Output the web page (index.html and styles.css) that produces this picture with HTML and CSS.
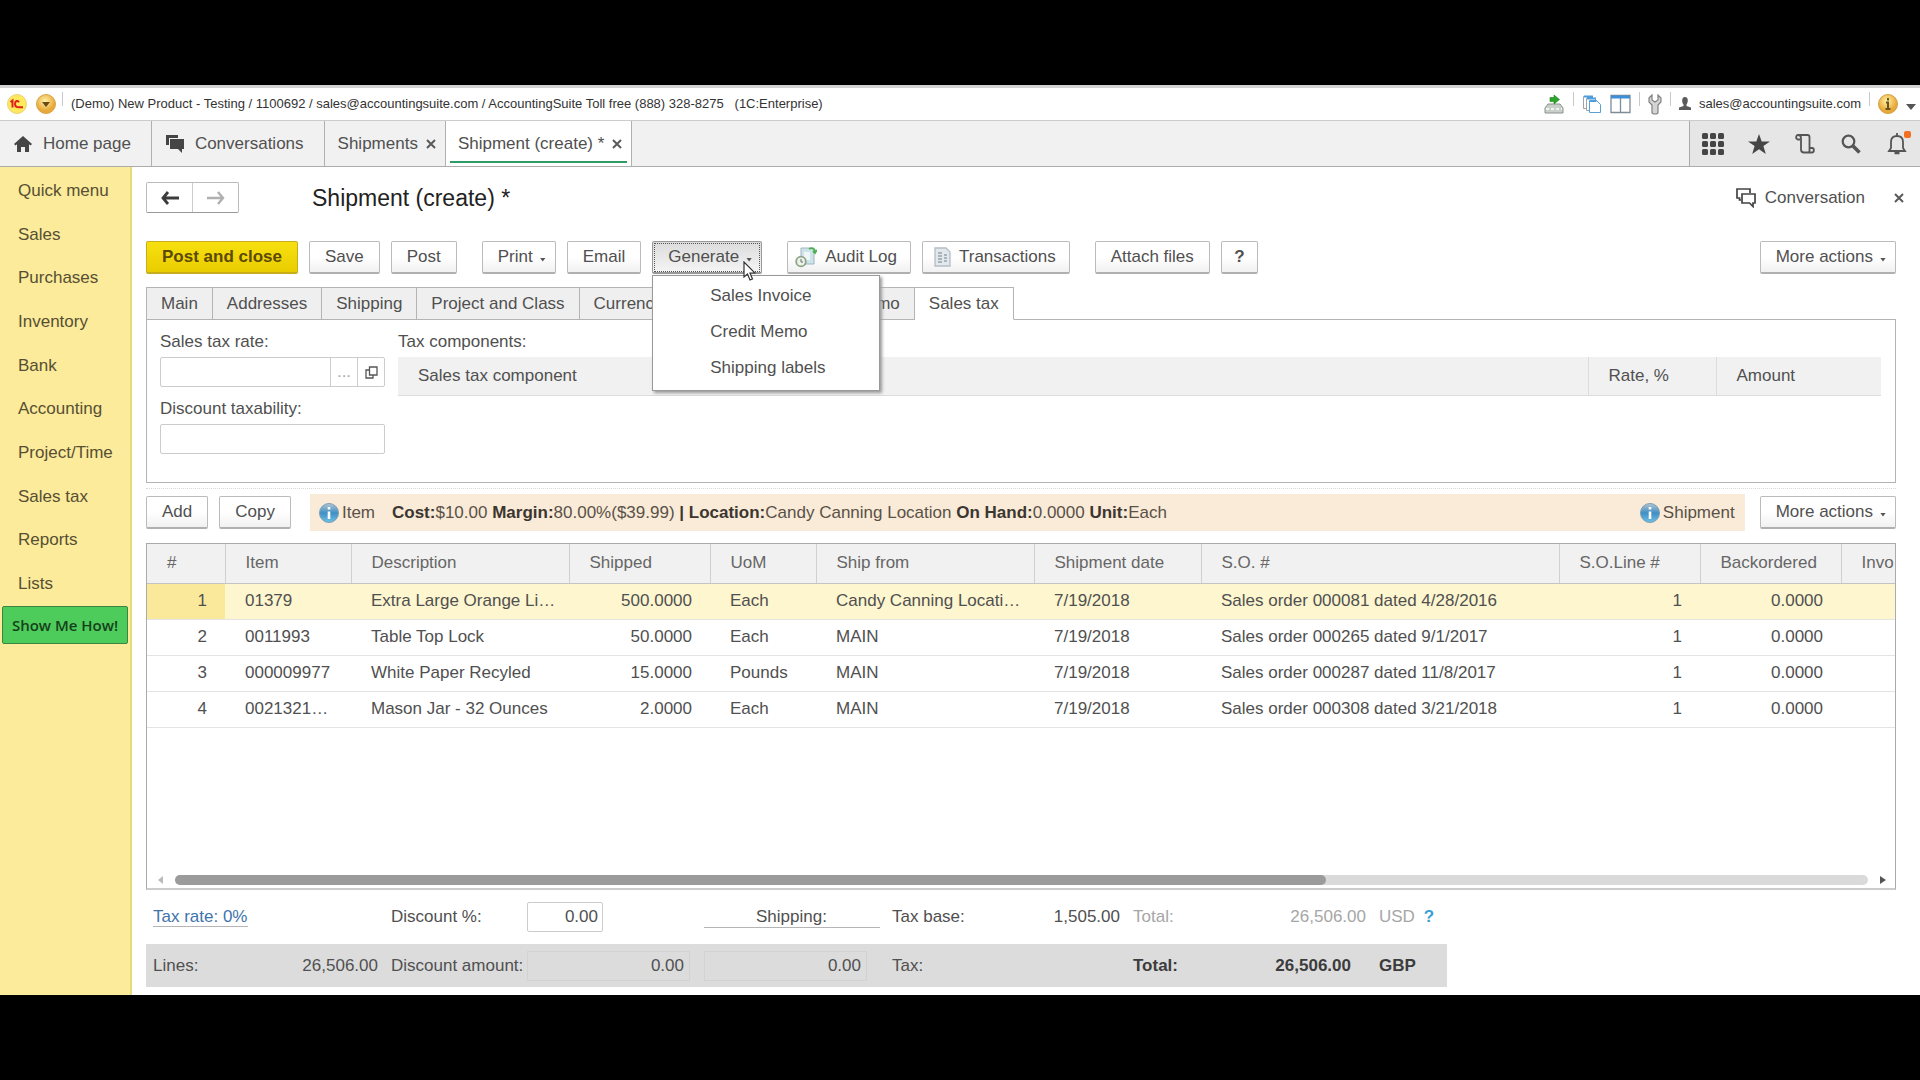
FILE: index.html
```html
<!DOCTYPE html>
<html lang="en">
<head>
<meta charset="utf-8">
<title>Shipment (create) - AccountingSuite</title>
<link rel="stylesheet" href="styles.css">
</head>
<body>
<div class="app">
  <header class="titlebar">
    <svg class="coin" viewBox="0 0 20 20"><defs><radialGradient id="gold" cx="45%" cy="35%"><stop offset="0" stop-color="#fff3a8"/><stop offset="1" stop-color="#e8a93a"/></radialGradient></defs><circle cx="10" cy="10" r="9.5" fill="#ffe95c" stroke="#e8d27a"/><path d="M3.500 8l2-1.500v7M12 8.200c-1-2-4-1.600-4 1.800 0 3 2 3.300 4 3.300h4" fill="none" stroke="#e0241b" stroke-width="2"/></svg>
    <svg class="coin" viewBox="0 0 20 20"><circle cx="10" cy="10" r="9.500" fill="url(#gold)" stroke="#d9a548"/><path d="M6 8h8l-4 5z" fill="#6b4a16"/></svg>
    <span class="sep"></span>
    <span class="app-title">(Demo) New Product - Testing / 1100692 / sales@accountingsuite.com / AccountingSuite Toll free (888) 328-8275 &nbsp; (1C:Enterprise)</span>
    <div class="title-tools">
      <svg width="22" height="20" viewBox="0 0 22 20"><path d="M2 14l3-4h12l3 4v5H2z" fill="#c9cfca" stroke="#8a948c"/><path d="M3 15h16" stroke="#fff" stroke-width="1.500" stroke-dasharray="3 2"/><path d="M7 3.500h4V1l5.500 4.500L11 10V7.500H7z" fill="#2ba52b" stroke="#1c7d1c" stroke-width=".6"/></svg>
      <span class="sep"></span>
      <svg width="20" height="20" viewBox="0 0 20 20" fill="#fff" stroke="#9ba5ae"><path d="M1.500 2.500h9v12h-9z"/><path d="M4.500 4.500h9v12h-9z"/><path d="M7.500 6.500h7l4 4v8h-11z" stroke="#5d9fd0"/><path d="M2 2.500h9M5 4.500h9M8 7h6.500" stroke="#4f9edb" stroke-width="2"/></svg>
      <svg width="21" height="20" viewBox="0 0 21 20"><path d="M1 1.500h19v17H1zM10.500 3v15" fill="#fff" stroke="#7e8c98" stroke-width="1.300"/><path d="M1 3h19" stroke="#3e8fd6" stroke-width="3"/></svg>
      <span class="sep"></span>
      <svg width="14" height="21" viewBox="0 0 14 21"><path d="M4 1L1 4v4l3 3v7.500c0 2 6 2 6 0V11l3-3V4l-3-3v5L7 8 4 6z" fill="#d4d4d4" stroke="#808080" stroke-width="1.200"/></svg>
      <span class="sep"></span>
      <svg width="12" height="14" viewBox="0 0 12 14"><path d="M6 0c4 0 3 6 1.500 7.500V9L12 10.500V13H0v-2.500L4.500 9V7.500C3 6 2 0 6 0z" fill="#5a5a5a"/></svg>
      <span>sales@accountingsuite.com</span>
      <span class="sep"></span>
      <svg class="coin" viewBox="0 0 20 20"><circle cx="10" cy="10" r="9.500" fill="url(#gold)" stroke="#d3a03c"/><path d="M10 4v2.500M8 8.500h2V15M7.500 15h5" stroke="#6b5220" stroke-width="2" fill="none"/></svg>
      <svg class="caret-big" width="10" height="6" viewBox="0 0 10 6"><path d="M0 0h10L5 6z" fill="#555"/></svg>
    </div>
  </header>

  <nav class="windowbar">
    <button class="wtab home"><svg width="18" height="16" viewBox="0 0 18 16"><path d="M9 0l9 8-1.500 1.500L15 8.300V16h-4v-5H7v5H3V8.300L1.500 9.500 0 8z" fill="#454545"/></svg>Home page</button>
    <button class="wtab talks"><svg width="18" height="18" viewBox="0 0 18 18"><path d="M0 0h12v3H3v7H0z" fill="#454545"/><path d="M4 4h14v10h-2v4l-4-4H4z" fill="#454545"/></svg>Conversations</button>
    <button class="wtab">Shipments<svg class="x" viewBox="0 0 10 10"><path d="M1 1l8 8M9 1L1 9"/></svg></button>
    <button class="wtab active">Shipment (create) *<svg class="x" viewBox="0 0 10 10"><path d="M1 1l8 8M9 1L1 9"/></svg></button>
    <div class="window-tools">
      <button class="tool" aria-label="Sections"><svg width="22" height="22" viewBox="0 0 22 22" fill="#454545"><rect width="6" height="6" rx="1.500"/><rect x="8" width="6" height="6" rx="1.500"/><rect x="16" width="6" height="6" rx="1.500"/><rect y="8" width="6" height="6" rx="1.500"/><rect x="8" y="8" width="6" height="6" rx="1.500"/><rect x="16" y="8" width="6" height="6" rx="1.500"/><rect y="16" width="6" height="6" rx="1.500"/><rect x="8" y="16" width="6" height="6" rx="1.500"/><rect x="16" y="16" width="6" height="6" rx="1.500"/></svg></button>
      <button class="tool" aria-label="Favorites"><svg width="22" height="20" viewBox="0 0 22 20"><path d="M11 0l2.700 7.400H22l-6.600 4.700L17.800 20 11 15.200 4.200 20l2.400-7.900L0 7.400h8.300z" fill="#454545"/></svg></button>
      <button class="tool" aria-label="History"><svg width="20" height="20" viewBox="0 0 20 20" fill="none" stroke="#555" stroke-width="1.800"><path d="M5 5.500H3C.5 5.500.5 1 3 1h9.500q2 0 2 2v11M3 1q3 0 3 3v11.500q0 3 3 3h8c2.500 0 2.500-4.500 0-4.500h-2.500v2.500q0 2-1.500 2"/></svg></button>
      <button class="tool" aria-label="Search"><svg width="20" height="20" viewBox="0 0 20 20" fill="none" stroke="#555"><circle cx="7.500" cy="7.500" r="5.800" stroke-width="2.200"/><path d="M12 12l6.500 6.500" stroke-width="3.600"/></svg></button>
      <button class="tool" aria-label="Notifications"><svg width="20" height="22" viewBox="0 0 20 22" fill="none" stroke="#555" stroke-width="1.800"><path d="M10 0v3M2 18h16l-2-3V9q0-6-6-6T4 9v6z"/><path d="M7.500 20h5" stroke-width="2.500"/></svg><span class="dot"></span></button>
    </div>
  </nav>

  <div class="body">
    <aside class="sidebar">
      <ul class="menu">
        <li><a href="#">Quick menu</a></li><li><a href="#">Sales</a></li><li><a href="#">Purchases</a></li><li><a href="#">Inventory</a></li><li><a href="#">Bank</a></li><li><a href="#">Accounting</a></li><li><a href="#">Project/Time</a></li><li><a href="#">Sales tax</a></li><li><a href="#">Reports</a></li><li><a href="#">Lists</a></li>
      </ul>
      <button class="show-me">Show Me How!</button>
    </aside>

    <main class="main">
      <div class="head">
        <div class="history">
          <button aria-label="Back"><svg width="18" height="14" viewBox="0 0 18 14"><path d="M7 1L2 7l5 6M2 7h16" fill="none" stroke="#3c3c3c" stroke-width="2.800"/></svg></button>
          <button aria-label="Forward"><svg width="18" height="14" viewBox="0 0 18 14"><path d="M11 1l5 6-5 6M16 7H0" fill="none" stroke="#b0b0b0" stroke-width="2.400"/></svg></button>
        </div>
        <h1>Shipment (create) *</h1>
        <button class="conversation"><svg width="20" height="20" viewBox="0 0 20 20" fill="none" stroke="#444" stroke-width="1.700"><path d="M5 12H3.500v-2H1V1h13v4"/><path d="M6 6h13v9h-2v3.500L13.500 15H6z"/></svg>Conversation</button>
        <button class="close" aria-label="Close"><svg class="x" viewBox="0 0 10 10"><path d="M1 1l8 8M9 1L1 9"/></svg></button>
      </div>

      <div class="toolbar">
        <button class="btn primary">Post and close</button>
        <button class="btn">Save</button>
        <button class="btn">Post</button>
        <button class="btn drop group">Print<i class="caret"></i></button>
        <button class="btn">Email</button>
        <div class="dropdown">
          <button class="btn drop open">Generate<i class="caret"></i></button>
          <div class="popup">
            <button>Sales Invoice</button>
            <button>Credit Memo</button>
            <button>Shipping labels</button>
          </div>
          <svg class="pointer" width="13" height="20" viewBox="0 0 13 20"><path d="M1 1v15l3.500-3 2.500 6 2.500-1-2.500-6H12z" fill="#fff" stroke="#333" stroke-width="1.200"/></svg>
        </div>
        <button class="btn icon group"><svg width="22" height="22" viewBox="0 0 22 22"><path d="M6 2h11l2 3v13H6z" fill="#cfe3ea" stroke="#9fb6bf"/><path d="M9 6h6v8H9z" fill="#eef6f8"/><path d="M14 3c4-2 6 0 6 3M18 5l2 2 2-3" fill="none" stroke="#4caf50" stroke-width="1.800"/><circle cx="6" cy="15.500" r="4.800" fill="#eef3e8" stroke="#8fa387" stroke-width="1.800"/><path d="M6 13v3h2" fill="none" stroke="#667" /></svg>Audit Log</button>
        <button class="btn icon doc"><svg width="17" height="20" viewBox="0 0 17 20"><path d="M1 1h11l4 4v14H1z" fill="#e3e8ec" stroke="#b4bec5" stroke-width="1.300"/><path d="M4 6h4M4 9h4M4 12h4M4 15h4M10 8h3M10 11h3M10 14h3" stroke="#95a3ad" stroke-width="1.400"/></svg>Transactions</button>
        <button class="btn group">Attach files</button>
        <button class="btn help">?</button>
        <button class="btn drop end">More actions<i class="caret"></i></button>
      </div>

      <div class="tabs" role="tablist">
        <button role="tab">Main</button><button role="tab">Addresses</button><button role="tab">Shipping</button><button role="tab">Project and Class</button><button role="tab" class="currency">Currency</button><button role="tab">Memo</button><button role="tab" class="active">Sales tax</button>
      </div>
      <section class="panel">
        <div class="fields">
          <label for="rate">Sales tax rate:</label>
          <div class="combo">
            <input id="rate" type="text">
            <button class="choose" aria-label="Choose">...</button>
            <button aria-label="Open"><svg width="13" height="13" viewBox="0 0 13 13" fill="none" stroke="#555" stroke-width="1.300"><path d="M4.500 1h7.500v8H4.500zM4.500 4H1v8h7V9"/></svg></button>
          </div>
          <label for="taxability">Discount taxability:</label>
          <input id="taxability" class="box" type="text">
        </div>
        <div class="components">
          <div>Tax components:</div>
          <table class="tax-table">
            <colgroup><col><col class="w-rate"><col class="w-amount"></colgroup>
            <thead><tr><th>Sales tax component</th><th>Rate, %</th><th>Amount</th></tr></thead>
          </table>
        </div>
      </section>

      <div class="linebar">
        <button class="btn">Add</button>
        <button class="btn">Copy</button>
        <div class="info">
          <svg class="ball" viewBox="0 0 20 20"><defs><linearGradient id="blue" x2="0" y2="1"><stop offset="0" stop-color="#b5c6d2"/><stop offset=".5" stop-color="#3f8fc4"/><stop offset="1" stop-color="#6ec1e8"/></linearGradient></defs><circle cx="10" cy="10" r="9.500" fill="url(#blue)" stroke="#7d9db3"/><path d="M10 4v2.500M10 8.500V16" stroke="#fff" stroke-width="2.600"/></svg>
          <span>Item</span>
          <p><b>Cost:</b>$10.00 <b>Margin:</b>80.00%($39.99) <b>|</b> <b>Location:</b>Candy Canning Location <b>On Hand:</b>0.0000 <b>Unit:</b>Each</p>
          <svg class="ball" viewBox="0 0 20 20"><circle cx="10" cy="10" r="9.500" fill="url(#blue)" stroke="#7d9db3"/><path d="M10 4v2.500M10 8.500V16" stroke="#fff" stroke-width="2.600"/></svg>
          <span>Shipment</span>
        </div>
        <button class="btn drop">More actions<i class="caret"></i></button>
      </div>

      <section class="grid">
        <table class="lines">
          <colgroup><col class="c1"><col class="c2"><col class="c3"><col class="c4"><col class="c5"><col class="c6"><col class="c7"><col class="c8"><col class="c9"><col class="c9"><col></colgroup>
          <thead><tr><th>#</th><th>Item</th><th>Description</th><th>Shipped</th><th>UoM</th><th>Ship from</th><th>Shipment date</th><th>S.O. #</th><th>S.O.Line #</th><th>Backordered</th><th>Invo</th></tr></thead>
          <tbody>
            <tr class="selected"><td class="n">1</td><td>01379</td><td>Extra Large Orange Li…</td><td class="n">500.0000</td><td>Each</td><td>Candy Canning Locati…</td><td>7/19/2018</td><td>Sales order 000081 dated 4/28/2016</td><td class="n">1</td><td class="n">0.0000</td><td></td></tr>
            <tr><td class="n">2</td><td>0011993</td><td>Table Top Lock</td><td class="n">50.0000</td><td>Each</td><td>MAIN</td><td>7/19/2018</td><td>Sales order 000265 dated 9/1/2017</td><td class="n">1</td><td class="n">0.0000</td><td></td></tr>
            <tr><td class="n">3</td><td>000009977</td><td>White Paper Recyled</td><td class="n">15.0000</td><td>Pounds</td><td>MAIN</td><td>7/19/2018</td><td>Sales order 000287 dated 11/8/2017</td><td class="n">1</td><td class="n">0.0000</td><td></td></tr>
            <tr><td class="n">4</td><td>0021321…</td><td>Mason Jar - 32 Ounces</td><td class="n">2.0000</td><td>Each</td><td>MAIN</td><td>7/19/2018</td><td>Sales order 000308 dated 3/21/2018</td><td class="n">1</td><td class="n">0.0000</td><td></td></tr>
          </tbody>
        </table>
        <div class="scroll">
          <svg width="5" height="8" viewBox="0 0 5 8"><path d="M5 0v8L0 4z" fill="#bbb"/></svg>
          <div class="track"><div class="thumb"></div></div>
          <svg width="6" height="8" viewBox="0 0 6 8"><path d="M0 0v8l6-4z" fill="#555"/></svg>
        </div>
      </section>

      <footer class="totals">
        <div class="row">
          <div><a href="#">Tax rate: 0%</a></div>
          <label for="disc">Discount %:</label>
          <div><input id="disc" class="percent" type="text" value="0.00"></div>
          <div><span class="shipping">Shipping:</span></div>
          <div class="pair">Tax base:<span>1,505.00</span></div>
          <div class="pair muted">Total:<span>26,506.00</span></div>
          <div class="muted">USD <button class="hint">?</button></div>
        </div>
        <div class="row band">
          <div class="pair">Lines:<span>26,506.00</span></div>
          <label for="damt">Discount amount:</label>
          <div><input id="damt" class="flat" type="text" value="0.00" readonly></div>
          <div><input class="flat" type="text" value="0.00" aria-label="Shipping amount" readonly></div>
          <div>Tax:</div>
          <div class="pair grand">Total:<span>26,506.00</span></div>
          <div class="strong">GBP</div>
        </div>
      </footer>
    </main>
  </div>
</div>
</body>
</html>
```

FILE: styles.css
```css
* { box-sizing: border-box; }
body {
  margin: 0;
  min-height: 100vh;
  padding: 85px 0;
  display: flex;
  background: #000;
  color: #505050;
  font: 17px/20px "Liberation Sans", Arial, sans-serif;
}
button, input { font: inherit; color: inherit; margin: 0; padding: 0; border: 0; background: none; }
svg { display: block; flex: none; }
p, h1, ul { margin: 0; padding: 0; }
.app { flex: 1; min-width: 0; display: flex; flex-direction: column; background: #fff; border-top: 3px solid #d2d2d2; }

/* window title */
.titlebar { display: flex; align-items: center; height: 33px; padding: 0 4px 0 7px; border-bottom: 1px solid #ccc; font-size: 13px; color: #333; white-space: nowrap; }
.coin { width: 20px; height: 20px; margin-right: 9px; }
.sep { width: 1px; height: 14px; margin-bottom: 10px; background: #c8c8c8; }
.titlebar > .sep { margin-left: -3px; margin-right: 8px; }
.title-tools { display: flex; align-items: center; gap: 8px; margin-left: auto; }
.title-tools .coin { margin-right: 0; }
.caret-big { margin-top: 6px; }

/* open windows */
.windowbar { display: flex; height: 46px; background: #f1f1f1; border-bottom: 1px solid #acacac; }
.wtab { display: flex; align-items: center; padding: 0 9px 0 13px; border-right: 1px solid #b0b0b0; white-space: nowrap; }
.wtab.home { gap: 11px; padding: 0 20px 0 14px; }
.wtab.talks { gap: 11px; padding: 0 20px 0 14px; }
.x { width: 10px; height: 10px; margin-left: 8px; fill: none; stroke: #5a5a5a; stroke-width: 2; }
.wtab.active { padding: 0 9px 0 12px; background: linear-gradient(#2f9c67, #2f9c67) center bottom 3px / calc(100% - 8px) 2px no-repeat #fff; }
.window-tools { display: flex; margin-left: auto; width: 231px; background: #e6e6e6; border-left: 1px solid #aaa; }
.tool { flex: 1; display: flex; align-items: center; justify-content: center; position: relative; }
.dot { position: absolute; top: 10px; right: 9px; width: 7px; height: 7px; border-radius: 2px; background: #f26f21; }

.body { flex: 1; display: flex; }
.sidebar { width: 132px; flex: none; padding-top: 2px; background: #fbeb9b; border-right: 2px solid #e6d978; }
.menu { display: grid; grid-auto-rows: 1fr; height: 437px; list-style: none; }
.menu li { display: flex; align-items: center; padding-left: 18px; }
.menu a { color: #574f33; text-decoration: none; }
.show-me { display: block; width: 126px; height: 38px; margin-left: 2px; background: #4dcc5c; border: 1px solid #3a8540; border-radius: 2px; color: #16401a; font: 600 15px/20px "Open Sans", "Noto Sans", sans-serif; }

.main { flex: 1; min-width: 0; display: flex; flex-direction: column; padding: 15px 24px 8px 14px; }

/* form heading */
.head { display: flex; align-items: center; height: 31px; margin-right: -8px; }
.history { display: flex; width: 93px; height: 31px; border: 1px solid #bbb; border-bottom-color: #999; border-radius: 2px; }
.history button { flex: 1; display: flex; align-items: center; justify-content: center; }
.history button + button { border-left: 1px solid #ccc; }
h1 { flex: 1; margin-left: 73px; font-size: 23px; line-height: 28px; font-weight: 400; color: #222; }
.conversation { display: flex; align-items: center; gap: 9px; }
.close { margin-left: 21px; }

.btn { height: 33px; padding: 0 15px; display: flex; align-items: center; justify-content: center; background: linear-gradient(#fff 50%, #f1f1f1); border: 1px solid #bbb; border-bottom: 2px solid #b0b0b0; border-radius: 2px; white-space: nowrap; }
.btn.primary { background: linear-gradient(#f8e010, #e9cd00); border-color: #c9ae1b; color: #5c4a04; font-weight: 700; }
.btn.drop { padding-right: 9px; }
.caret { width: 6px; height: 4px; margin: 5px 0 0 7px; background: #555; clip-path: polygon(0 0, 100% 0, 50% 100%); }
.toolbar { display: flex; gap: 11px; margin-top: 28px; }
.toolbar .group { margin-left: 14px; }
.toolbar .end { margin-left: auto; }
.btn.icon { gap: 8px; padding: 0 13px 0 7px; }
.btn.doc { padding-left: 11px; }
.btn.help { width: 37px; padding: 0; font-weight: 700; }
.btn.open { background: linear-gradient(#dcdcdc, #f4f4f4); border-color: #999; outline: 1px dotted #555; outline-offset: -3px; }
.dropdown { position: relative; }
.popup { position: absolute; z-index: 3; top: 34px; left: 0; width: 228px; padding: 2px 0 4px; background: #fff; border: 1px solid #999; box-shadow: 2px 2px 3px #999; }
.popup button { display: block; width: 100%; height: 36px; padding-left: 57px; text-align: left; }
.pointer { position: absolute; z-index: 4; top: 20px; left: 91px; }

/* form pages */
.tabs { display: flex; margin-top: 13px; position: relative; z-index: 1; margin-bottom: -1px; }
.tabs button { height: 33px; padding: 0 14px; background: #efefef; border: 1px solid #b4b4b4; border-left-width: 0; text-align: left; white-space: nowrap; }
.tabs button:first-child { border-left-width: 1px; }
.tabs .currency { width: 259px; }
.tabs .active { background: #fff; border-bottom-color: #fff; }
.panel { display: flex; gap: 13px; padding: 12px 14px 28px 13px; border: 1px solid #b4b4b4; }
.fields { width: 225px; flex: none; display: flex; flex-direction: column; gap: 5px; }
.combo { display: flex; height: 30px; margin-bottom: 7px; border: 1px solid #ccc; border-radius: 2px; }
.combo input { flex: 1; min-width: 0; }
.combo button { width: 27px; display: flex; align-items: center; justify-content: center; border-left: 1px solid #ccc; }
.combo .choose { color: #aaa; }
.box { height: 30px; border: 1px solid #ccc; border-radius: 2px; }
.components { flex: 1; }
table { border-collapse: collapse; table-layout: fixed; width: 100%; }
th { text-align: left; font-weight: 400; }
.tax-table { margin-top: 5px; background: #f1f1f1; border-bottom: 1px solid #ddd; }
.tax-table th { height: 38px; padding: 0 20px; }
.tax-table th + th { border-left: 1px solid #ddd; }
.w-rate { width: 128px; }
.w-amount { width: 165px; }

/* line commands */
.linebar { display: flex; align-items: center; gap: 11px; margin: 5px 0 12px; padding-top: 5px; border-top: 1px dotted #d8d8d8; }
.info { flex: 1; display: flex; align-items: center; height: 37px; margin: 0 4px 0 8px; padding: 0 10px 0 9px; background: #f9ebd7; white-space: nowrap; color: #5a5148; }
.info p { flex: 1; margin-left: 17px; }
.info b { color: #3c3630; }
.ball { width: 20px; height: 20px; margin-right: 3px; }

/* shipment lines */
.grid { flex: 1; display: flex; flex-direction: column; border: 1px solid #aaa; border-bottom: 2px solid #ccc; }
.lines th, .lines td { padding: 0 0 0 20px; overflow: hidden; white-space: nowrap; }
.lines th { height: 39px; background: #f1f1f1; border-bottom: 1px solid #c4c4c4; color: #666; }
.lines th + th { border-left: 1px solid #d0d0d0; }
.lines td { height: 36px; border-bottom: 1px solid #e4e4e4; }
.lines .n { padding: 0 18px 0 0; text-align: right; }
.lines .selected td { background: #fdf6cf; }
.lines .selected td:first-child { background: #fbe99b; }
.c1 { width: 78px; } .c2 { width: 126px; } .c3 { width: 218px; } .c4 { width: 141px; } .c5 { width: 106px; }
.c6 { width: 218px; } .c7 { width: 167px; } .c8 { width: 358px; } .c9 { width: 141px; }
.scroll { display: flex; align-items: center; gap: 12px; margin-top: auto; padding: 0 9px 3px 11px; }
.track { flex: 1; height: 10px; border-radius: 5px; background: #dadada; }
.thumb { width: 68%; height: 10px; border-radius: 5px; background: #9b9b9b; }

/* totals */
.totals { padding-top: 12px; }
.row { display: grid; grid-template-columns: 238px 136px 177px 188px 241px 246px 68px; align-items: center; width: max-content; height: 30px; padding-left: 7px; white-space: nowrap; }
.row.band { height: 43px; margin-top: 12px; background: #dcdcdc; }
.row a { color: #3f74ad; text-decoration: none; border-bottom: 1px solid #b5b5b5; }
.pair { display: flex; justify-content: space-between; padding-right: 13px; }
.muted { color: #a6a6a6; }
.strong, .grand { font-weight: 700; color: #3c3c3c; }
.pair.grand { padding-right: 28px; }
.percent { width: 76px; height: 30px; padding-right: 4px; text-align: right; border: 1px solid #ccc; border-radius: 2px; }
.flat { width: 163px; height: 30px; padding-right: 5px; text-align: right; border: 1px solid #d2d2d2; }
.shipping { display: block; width: 176px; padding-left: 52px; border-bottom: 1px solid #b5b5b5; }
.hint { margin-left: 4px; color: #3a9fd6; font-weight: 700; }
```
